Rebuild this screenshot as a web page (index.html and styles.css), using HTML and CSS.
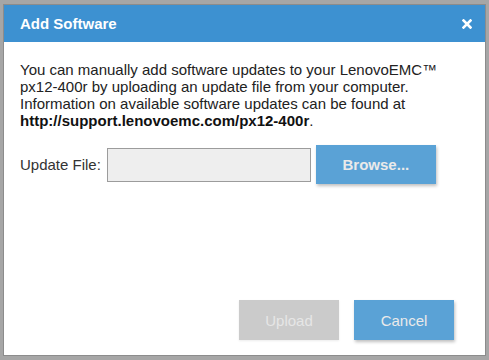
FILE: index.html
```html
<!DOCTYPE html>
<html lang="en">
<head>
    <meta charset="UTF-8">
    <title>Add Software</title>
    <link rel="stylesheet" href="styles.css">
</head>
<body>
    <div class="dialog">
        <header class="dialog-header">
            <h1>Add Software</h1>
            <button class="close-btn" aria-label="Close">
                <svg width="10" height="10" viewBox="0 0 10 10">
                    <path d="M1.5 1.5 L8.5 8.5 M8.5 1.5 L1.5 8.5" stroke="#fff" stroke-width="2.6" stroke-linecap="square"/>
                </svg>
            </button>
        </header>

        <div class="dialog-body">
            <p class="intro">
                You can manually add software updates to your LenovoEMC™ px12-400r by uploading an update file from your computer.
                Information on available software updates can be found at
                <a class="support-link" href="#">http://support.lenovoemc.com/px12-400r</a>.
            </p>

            <div class="file-row">
                <label for="update-file">Update File:</label>
                <input type="text" id="update-file" class="file-input" readonly>
                <button class="btn btn-primary browse-btn">Browse...</button>
            </div>
        </div>

        <footer class="dialog-footer">
            <button class="btn btn-disabled" disabled>Upload</button>
            <button class="btn btn-primary">Cancel</button>
        </footer>
    </div>
</body>
</html>
```

FILE: styles.css
```css
/* Base */
* {
    margin: 0;
    padding: 0;
    box-sizing: border-box;
    font-family: 'Liberation Sans', Arial, sans-serif;
}

body {
    background-color: #a6a6a6;
    width: 489px;
    height: 360px;
    overflow: hidden;
}

/* Dialog */
.dialog {
    width: 483px;
    height: 352px;
    margin: 4px 0 0 3px;
    background: #fff;
    border: 1px solid #8c8c8c;
    display: flex;
    flex-direction: column;
}

.dialog-header {
    height: 37px;
    background-color: #3d91d1;
    display: flex;
    align-items: center;
    justify-content: space-between;
    padding: 0 13px 0 16px;
}

.dialog-header h1 {
    color: #fff;
    font-size: 15px;
    font-weight: bold;
    margin-top: -1px;
}

.close-btn {
    width: 10px;
    height: 10px;
    background: transparent;
    border: none;
    display: flex;
    cursor: pointer;
}

/* Body */
.dialog-body {
    flex: 1;
    padding: 19px 20px 0 16px;
}

.intro {
    font-size: 15px;
    line-height: 17px;
    color: #222;
}

.support-link {
    color: #111;
    font-weight: bold;
    text-decoration: none;
}

.file-row {
    display: flex;
    align-items: center;
    margin-top: 16px;
}

.file-row label {
    font-size: 15px;
    color: #333;
    margin-right: 6px;
}

.file-input {
    width: 204px;
    height: 34px;
    background-color: #eeeeee;
    border: 1px solid #9c9c9c;
    outline: none;
}

.browse-btn {
    width: 120px;
    height: 39px;
    margin-left: 5px;
    font-weight: bold;
    color: #dcdcdc;
}

/* Buttons */
.btn {
    border: none;
    font-size: 15px;
    cursor: pointer;
}

.btn-primary {
    background-color: #5aa2d6;
    color: #eaeaea;
    box-shadow: 1px 2px 3px rgba(0, 0, 0, 0.25);
}

.btn-disabled {
    background-color: #cbcbcb;
    color: #e6e6e6;
    cursor: default;
    box-shadow: 0 1px 2px rgba(0, 0, 0, 0.08);
}

/* Footer */
.dialog-footer {
    display: flex;
    justify-content: flex-end;
    gap: 15px;
    padding: 0 31px 15px 0;
}

.dialog-footer .btn {
    width: 100px;
    height: 40px;
}
```
